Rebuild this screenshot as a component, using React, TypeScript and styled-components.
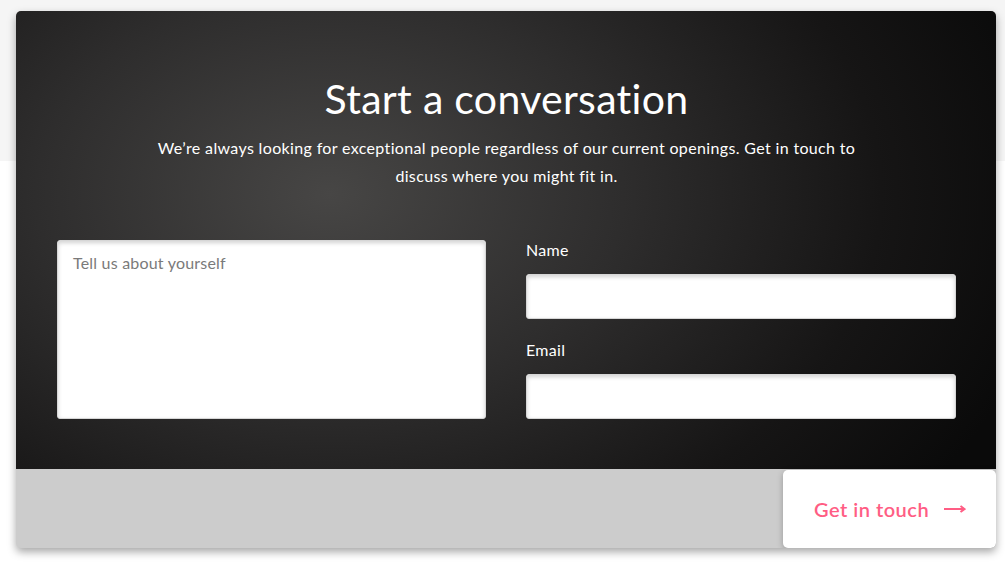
import React from "react";
import styled, { createGlobalStyle } from "styled-components";

const Global = createGlobalStyle`
  html, body { margin: 0; padding: 0; }
  body {
    font-family: Lato, "Open Sans", sans-serif;
    background: linear-gradient(to bottom, #f5f5f5 0, #f5f5f5 161px, #ffffff 161px);
    min-height: 563px;
  }
  * { box-sizing: border-box; }
`;

const Page = styled.div`
  padding: 11px 9px 15px 16px;
`;

const Card = styled.section`
  width: 980px;
  border-radius: 5px;
  overflow: hidden;
  box-shadow: 0 4px 8px rgba(0, 0, 0, 0.35);
  background: #cccccc;
`;

const Hero = styled.div`
  background: radial-gradient(ellipse 75% 110% at 32% 40%, #474645 0%, #2e2d2d 40%, #161515 75%, #0a0a0a 100%);
  padding: 65px 40px 50px 41px;
  color: #fff;
`;

const Title = styled.h1`
  margin: 0;
  text-align: center;
  font-weight: 400;
  font-size: 41px;
  line-height: 46px;
  letter-spacing: 0.3px;
`;

const Lead = styled.p`
  margin: 12px auto 0;
  max-width: 705px;
  text-align: center;
  font-size: 16px;
  letter-spacing: 0.35px;
  line-height: 28px;
`;

const Form = styled.div`
  margin-top: 50px;
  display: grid;
  grid-template-columns: 429px 430px;
  column-gap: 40px;
`;

const TextArea = styled.textarea`
  width: 100%;
  height: 179px;
  resize: none;
  border: 1px solid #d6d6d6;
  border-radius: 3px;
  background: #fff;
  box-shadow: inset 0 2px 4px rgba(0, 0, 0, 0.18);
  padding: 12px 15px;
  font-family: Lato, "Open Sans", sans-serif;
  font-size: 16px;
  letter-spacing: 0.2px;
  &::placeholder { color: #7a7a7a; }
`;

const Fields = styled.div`
  display: flex;
  flex-direction: column;
`;

const Label = styled.label`
  display: block;
  font-size: 16px;
  letter-spacing: 0.3px;
  line-height: 20px;
  margin: 0 0 14px;
  color: #fff;
`;

const Input = styled.input<{ $last?: boolean }>`
  width: 100%;
  height: 45px;
  border: 1px solid #d6d6d6;
  border-radius: 3px;
  background: #fff;
  box-shadow: inset 0 2px 4px rgba(0, 0, 0, 0.18);
  margin-bottom: ${(p) => (p.$last ? 0 : "21px")};
`;

const Footer = styled.div`
  height: 79px;
  display: flex;
  justify-content: flex-end;
  padding-top: 1px;
`;

const Button = styled.button`
  width: 213px;
  height: 78px;
  border: none;
  border-radius: 5px;
  background: #fff;
  box-shadow: 0 2px 6px rgba(0, 0, 0, 0.25);
  display: flex;
  align-items: center;
  padding: 0 0 0 31px;
  gap: 15px;
  color: #ff5d84;
  font-family: Lato, "Open Sans", sans-serif;
  font-size: 20px;
  letter-spacing: 0.5px;
  font-weight: 600;
  cursor: pointer;
`;

export default function App() {
  return (
    <>
      <Global />
      <Page>
        <Card>
          <Hero>
            <Title>Start a conversation</Title>
            <Lead>
              We’re always looking for exceptional people regardless of our current openings. Get in touch to
              discuss where you might fit in.
            </Lead>
            <Form>
              <TextArea placeholder="Tell us about yourself" />
              <Fields>
                <Label>Name</Label>
                <Input type="text" />
                <Label>Email</Label>
                <Input type="email" $last />
              </Fields>
            </Form>
          </Hero>
          <Footer>
            <Button>
              Get in touch
              <svg width="22" height="10" viewBox="0 0 22 10" aria-hidden="true">
                <path d="M0 5h20M16.5 2L20.5 5L16.5 8" stroke="#ff5d84" strokeWidth="2" fill="none" />
              </svg>
            </Button>
          </Footer>
        </Card>
      </Page>
    </>
  );
}
